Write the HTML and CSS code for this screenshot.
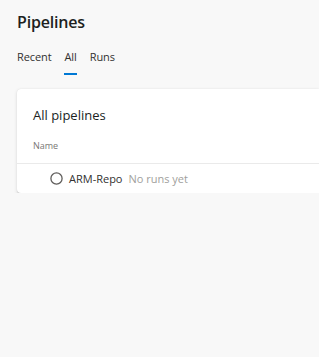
FILE: index.html
```html
<!DOCTYPE html>
<html>
<head>
<meta charset="utf-8">
<link rel="stylesheet" href="styles.css">
</head>
<body>
<div class="page">
  <h1 class="title">Pipelines</h1>
  <nav class="tabs">
    <span class="tab">Recent</span>
    <span class="tab active">All</span>
    <span class="tab">Runs</span>
  </nav>
  <section class="card">
    <h2 class="card-title">All pipelines</h2>
    <div class="col-head">Name</div>
    <div class="row">
      <svg class="status" width="13" height="13" viewBox="0 0 13 13"><circle cx="6.5" cy="6.5" r="5.6" fill="none" stroke="#605e5c" stroke-width="1.3"/></svg>
      <span class="name">ARM-Repo</span>
      <span class="sub">No runs yet</span>
    </div>
  </section>
</div>
</body>
</html>
```
FILE: styles.css
```css
html, body {
  margin: 0;
  padding: 0;
  background: #f8f8f8;
  font-family: "Open Sans", "Noto Sans", sans-serif;
  color: #201f1e;
  overflow: hidden;
}
.page {
  padding: 10px 0 0 17px;
}
.title {
  margin: 0;
  font-size: 16px;
  font-weight: 600;
  line-height: 24px;
  letter-spacing: -0.2px;
}
.tabs {
  display: flex;
  align-items: flex-start;
  gap: 13px;
  margin-top: 12px;
  height: 30px;
}
.tab {
  font-size: 11px;
  line-height: 22px;
  position: relative;
  color: #323130;
  letter-spacing: -0.1px;
}
.tab.active::after {
  content: "";
  position: absolute;
  left: 0;
  right: 0;
  bottom: -7px;
  height: 2px;
  background: #0078d4;
}
.card {
  margin-top: 13px;
  background: #fff;
  border-radius: 4px 0 0 4px;
  box-shadow: 0 1.6px 3.6px rgba(0,0,0,0.13), 0 0.3px 0.9px rgba(0,0,0,0.11);
  height: 104px;
  box-sizing: border-box;
}
.card-title {
  margin: 0;
  padding: 16px 0 0 16px;
  font-size: 13px;
  font-weight: 400;
  line-height: 20px;
}
.col-head {
  padding: 14px 0 0 16px;
  font-size: 9px;
  line-height: 14px;
  color: #797775;
  height: 24px;
  border-bottom: 1px solid #eaeaea;
}
.row {
  display: flex;
  align-items: center;
  height: 29px;
  padding-left: 33px;
  font-size: 11px;
}
.status {
  margin-right: 6px;
}
.name {
  color: #323130;
  margin-right: 6px;
}
.sub {
  color: #a19f9d;
}
```
